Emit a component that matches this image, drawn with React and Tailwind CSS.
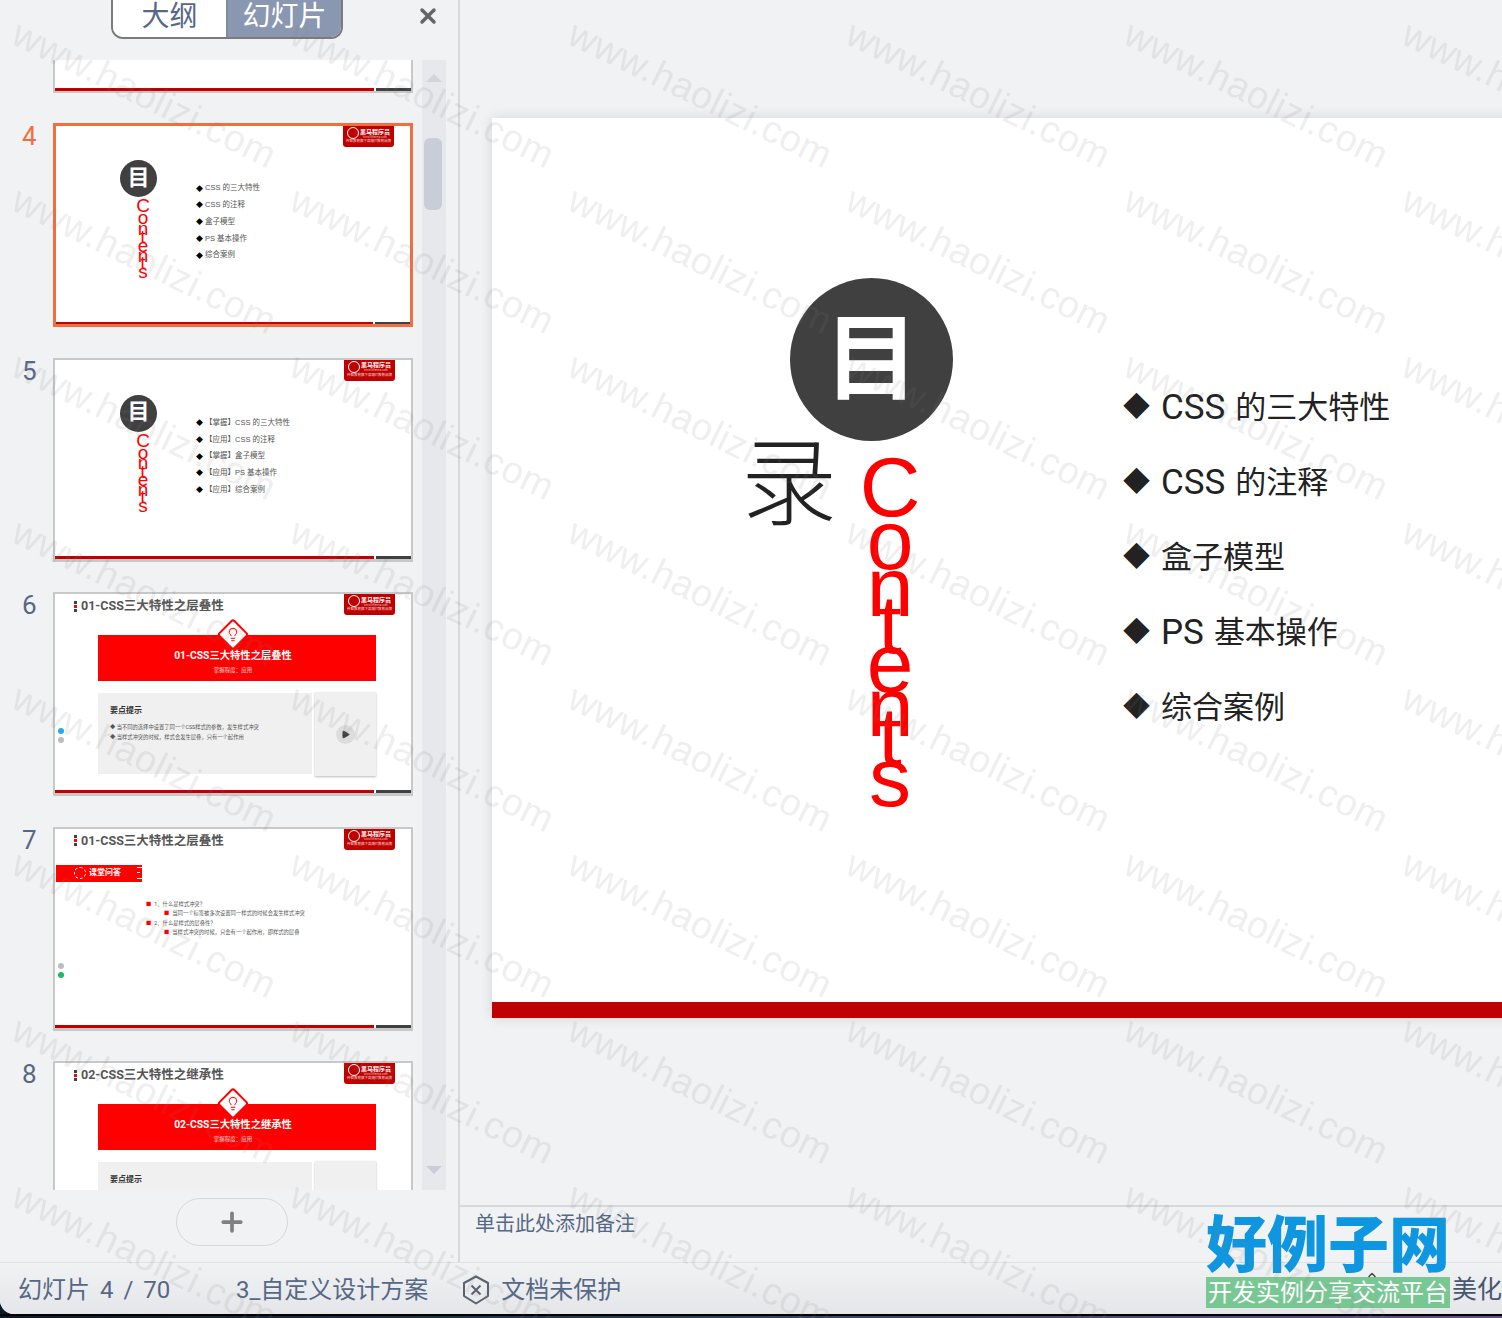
import React from "react";
import { X, Plus, Play, Lightbulb, ChevronUp } from "lucide-react";

const cjk = "font-['Roboto','Noto_Sans_CJK_SC','Liberation_Sans',sans-serif]";

const Watermark = () => {
  const cells = Array.from({ length: 54 });
  return (
    <div className="absolute inset-0 z-20 overflow-hidden pointer-events-none">
      <div className="absolute left-0 top-0 grid grid-cols-[repeat(6,278px)] auto-rows-[166px]">
        {cells.map((_, i) => (
          <div key={i} className="relative h-[166px] w-[278px]">
            <span className="absolute left-[15px] top-[12px] origin-left rotate-[26deg] whitespace-nowrap font-['Liberation_Sans',sans-serif] text-[38px] leading-none tracking-[0.5px] text-[#7f7f7f]/15">
              www.haolizi.com
            </span>
          </div>
        ))}
      </div>
    </div>
  );
};

const Badge = () => (
  <div className="absolute right-[16px] top-0 flex h-[21px] w-[51px] flex-col items-center rounded-b-[3px] bg-[#c00000] pt-[1px]">
    <div className="flex items-center gap-[1px]">
      <div className="h-[12px] w-[12px] rounded-full border-[1.5px] border-white" />
      <div className="flex flex-col items-center">
        <span className="text-[6px] font-bold leading-[7px] text-white">黑马程序员</span>
        <span className="text-[3px] leading-[4px] text-white/70">www.itheima.com</span>
      </div>
    </div>
    <div className="whitespace-nowrap text-[3.5px] leading-[5px] text-white/80">传智教育旗下高端IT教育品牌</div>
  </div>
);

const Footer = ({ thin }) => (
  <div className={`absolute inset-x-0 bottom-0 flex gap-[2px] ${thin ? "h-[2px]" : "h-[3px]"}`}>
    <div className="flex-1 bg-[#c00000]" />
    <div className="w-[35px] bg-[#404040]" />
  </div>
);

const MuIcon = ({ className }) => (
  <div className={`flex items-center justify-center rounded-full bg-[#404040] font-bold leading-none text-white ${className}`}>
    目
  </div>
);

const thumbLetters = [
  ["C", "h-[12px]"],
  ["o", "h-[10.7px]"],
  ["n", "h-[8.4px]"],
  ["t", "h-[8.9px]"],
  ["e", "h-[10px]"],
  ["n", "h-[6.6px]"],
  ["t", "h-[9.3px]"],
  ["s", "h-[9.3px]"],
];

const TocThumb = ({ items }) => (
  <div className="flex h-full">
    <div className="ml-[64px] mt-[34px] flex w-[37px] flex-col items-start">
      <MuIcon className="h-[37px] w-[37px] pb-[2px] text-[22px]" />
      <div className="ml-[13px] mt-[9px] flex w-[20px] flex-col items-center font-['Liberation_Sans',sans-serif] text-[19px] text-[#ff0000]">
        {thumbLetters.map(([c, cls], i) => (
          <span key={i} className={`${cls} leading-[0px]`}>{c}</span>
        ))}
      </div>
    </div>
    <div className="ml-[39px] mt-[56px] flex flex-col gap-[4.75px] font-['Liberation_Sans','Noto_Sans_CJK_SC',sans-serif]">
      {items.map((t) => (
        <div key={t} className="flex h-[12px] items-center gap-[2px] text-[7.5px] leading-none text-[#555]">
          <span className="text-[7px] text-black">◆</span>
          <span>{t}</span>
        </div>
      ))}
    </div>
  </div>
);

const SlideTitle = ({ children }) => (
  <div className="flex items-center gap-[4px] pl-[18px] pt-[3px] text-[12.5px] font-bold leading-[16px] text-[#555]">
    <div className="flex flex-col gap-[1px]">
      <div className="h-[3px] w-[3px] bg-[#404040]" />
      <div className="h-[3px] w-[3px] bg-[#ff0000]" />
      <div className="h-[3px] w-[3px] bg-[#404040]" />
    </div>
    {children}
  </div>
);

const BulbDiamond = () => (
  <div className="absolute left-[calc(50%-4px)] top-[-12px] flex h-[23px] w-[23px] -translate-x-1/2 rotate-45 items-center justify-center rounded-[3px] border-[2px] border-[#ff0000] bg-white">
    <Lightbulb size={15} strokeWidth={1.6} className="-rotate-45 text-[#ff0000]" />
  </div>
);

const SectionThumb = ({ title, lines }) => (
  <div className="flex h-full flex-col">
    <SlideTitle>{title}</SlideTitle>
    <div className="relative ml-[42px] mt-[21px] flex h-[46px] w-[278px] flex-col items-center bg-[#ff0000] pr-[8px] pt-[13px] text-white">
      <BulbDiamond />
      <div className="text-[10.3px] font-bold leading-[16px]">{title}</div>
      <div className="mt-[2px] text-[5.5px] leading-[8px] text-white/80">掌握程度：应用</div>
    </div>
    <div className="ml-[42px] mt-[11px] flex h-[84px] w-[278px] gap-[3px]">
      <div className="mt-[1px] h-[81px] flex-1 bg-[#f0f0f0] pl-[12px] pt-[12px]">
        <div className="text-[8px] font-bold leading-[12px] text-[#333]">要点提示</div>
        <div className="mt-[5px] flex flex-col">
          {lines.map((l) => (
            <div key={l} className="whitespace-nowrap text-[5.3px] leading-[10px] text-[#555]">◆ {l}</div>
          ))}
        </div>
      </div>
      <div className="flex w-[61px] items-center justify-center bg-[#f0f0f0] shadow-[0_1px_2px_#bbb]">
        {lines.length > 0 && (
          <div className="flex h-[19px] w-[19px] items-center justify-center rounded-full bg-[#dcdcdc]">
            <Play size={9} className="fill-[#404040] text-[#404040]" />
          </div>
        )}
      </div>
    </div>
    {lines.length > 0 && (
      <div className="absolute left-[3px] top-[134px] flex flex-col gap-[3px]">
        <div className="h-[6px] w-[6px] rounded-full bg-[#27a9e9]" />
        <div className="h-[6px] w-[6px] rounded-full bg-[#bdbdbd]" />
      </div>
    )}
  </div>
);

const QaThumb = () => (
  <div className="flex h-full flex-col">
    <SlideTitle>01-CSS三大特性之层叠性</SlideTitle>
    <div className="mt-[16px] flex h-[17px] w-[86px] items-center bg-[#ff0000] pl-[18px] text-white">
      <div className="mr-[3px] h-[12px] w-[12px] rounded-full border border-dashed border-white" />
      <span className="text-[8px] font-bold leading-none">课堂问答</span>
      <div className="ml-auto flex h-full flex-col justify-around">
        <div className="h-[1px] w-[5px] bg-white" />
        <div className="h-[1px] w-[3px] bg-white" />
        <div className="h-[1px] w-[5px] bg-white" />
      </div>
    </div>
    <div className="ml-[90px] mt-[18px] flex flex-col text-[5.3px] leading-[9.6px] text-[#555]">
      <div className="whitespace-nowrap"><span className="mr-[3px] text-[#ff0000]">■</span>1、什么是样式冲突？</div>
      <div className="ml-[18px] whitespace-nowrap"><span className="mr-[3px] text-[#ff0000]">■</span>当同一个标签被多次设置同一样式的时候会发生样式冲突</div>
      <div className="whitespace-nowrap"><span className="mr-[3px] text-[#ff0000]">■</span>2、什么是样式的层叠性？</div>
      <div className="ml-[18px] whitespace-nowrap"><span className="mr-[3px] text-[#ff0000]">■</span>当样式冲突的时候，只会有一个起作用，即样式的层叠</div>
    </div>
    <div className="absolute left-[3px] top-[134px] flex flex-col gap-[3px]">
      <div className="h-[6px] w-[6px] rounded-full bg-[#bdbdbd]" />
      <div className="h-[6px] w-[6px] rounded-full bg-[#1fb964]" />
    </div>
  </div>
);

const Thumb = ({ num, active, children, clip }) => (
  <div className={`flex ${clip ? "h-[129px]" : "h-[204px]"} shrink-0`}>
    <div className={`ml-[22px] w-[31px] text-[26px] leading-[26px] ${active ? "text-[#f36d41]" : "text-[#566885]"}`}>{num}</div>
    <div className={`relative h-[204px] w-[360px] shrink-0 bg-white ${active ? "border-[3px] border-[#f36d41]" : "border-2 border-b-[3px] border-[#c8c8c8]"}`}>
      <Badge />
      <div className={`h-full ${active ? "" : "pl-[1px] pt-[1px]"}`}>{children}</div>
      <Footer thin={active} />
    </div>
  </div>
);

const mainItems = [
  ["CSS", "的三大特性"],
  ["CSS", "的注释"],
  ["", "盒子模型"],
  ["PS", "基本操作"],
  ["", "综合案例"],
];

// baseline to baseline distance of the squeezed vertical word
const contents = [
  ["C", "h-[53px]"],
  ["o", "h-[47px]"],
  ["n", "h-[37px]"],
  ["t", "h-[39px]"],
  ["e", "h-[44px]"],
  ["n", "h-[29px]"],
  ["t", "h-[41px]"],
  ["s", "h-[41px]"],
];

const MainSlide = () => (
  <div className="relative ml-[32px] mt-[118px] h-[900px] w-[1200px] bg-white shadow-[0_0_12px_rgba(0,0,0,0.12)]">
    <div className="flex h-full">
      <div className="ml-[255px] flex w-[376px] flex-col items-start pt-[160px]">
        <MuIcon className="ml-[43px] h-[163px] w-[163px] text-[94px]" />
        <div className="flex">
          <div className="-ml-[6px] -mt-[5px] w-[124px] text-[96px] font-light leading-[96px] text-[#222]">录</div>
          <div className="mt-[46px] flex w-[50px] flex-col items-center font-['Liberation_Sans',sans-serif] text-[84px] text-[#ff0000]">
            {contents.map(([c, cls], i) => (
              <span key={i} className={`${cls} leading-[0px]`}>{c}</span>
            ))}
          </div>
        </div>
      </div>
      <div className="mt-[261px] flex flex-col gap-[19px]">
        {mainItems.map(([latin, rest]) => (
          <div key={latin + rest} className="flex h-[56px] items-center text-[31px] leading-none text-[#222]">
            <span className="w-[38px] text-[27px] leading-none">◆</span>
            {latin && <span className="mr-[10px] text-[35px]">{latin}</span>}
            <span>{rest}</span>
          </div>
        ))}
      </div>
    </div>
    <div className="absolute inset-x-0 bottom-0 h-[16px] bg-[#c00000]" />
  </div>
);

const Sidebar = () => (
  <div className="flex w-[460px] shrink-0 flex-col border-r-2 border-[#d5d8dd]">
    <div className="flex h-[60px] items-start">
      <div className="ml-[111px] flex h-[39px] w-[232px] overflow-hidden rounded-b-[12px] border-2 border-t-0 border-[#7b7b7b]">
        <div className="flex w-[113px] items-center justify-center bg-white pb-[4px] text-[28px] text-[#566885]">大纲</div>
        <div className="flex flex-1 items-center justify-center border-l-2 border-[#7b7b7b]/40 bg-[#8a97b1] pb-[4px] text-[28px] text-white">幻灯片</div>
      </div>
      <X size={24} strokeWidth={3.5} className="ml-[73px] mt-[4px] text-[#666]" />
    </div>
    <div className="flex h-[1130px] overflow-hidden">
      <div className="flex w-[422px] flex-col gap-[30.5px] overflow-hidden">
        <div className="relative mb-[-0.5px] ml-[53px] h-[33px] w-[360px] shrink-0 border-x-2 border-b-2 border-[#c8c8c8] bg-white">
          <Footer />
        </div>
        <Thumb num={4} active>
          <TocThumb items={["CSS 的三大特性", "CSS 的注释", "盒子模型", "PS 基本操作", "综合案例"]} />
        </Thumb>
        <Thumb num={5}>
          <TocThumb items={["【掌握】CSS 的三大特性", "【应用】CSS 的注释", "【掌握】盒子模型", "【应用】PS 基本操作", "【应用】综合案例"]} />
        </Thumb>
        <Thumb num={6}>
          <SectionThumb title="01-CSS三大特性之层叠性" lines={["当不同的选择中设置了同一个CSS样式的参数，发生样式冲突", "当样式冲突的时候，样式会发生层叠，只有一个起作用"]} />
        </Thumb>
        <Thumb num={7}>
          <QaThumb />
        </Thumb>
        <Thumb num={8} clip>
          <SectionThumb title="02-CSS三大特性之继承性" lines={[]} />
        </Thumb>
      </div>
      <div className="flex w-[24px] flex-col items-center bg-[#e6e8ec] pt-[14px]">
        <div className="h-0 w-0 border-x-[8px] border-b-[8px] border-x-transparent border-b-[#d0d4db]" />
        <div className="mr-[2px] mt-[56px] h-[72px] w-[18px] rounded-[6px] bg-[#c8cdd7]" />
        <div className="mb-[16px] mt-auto h-0 w-0 border-x-[8px] border-t-[8px] border-x-transparent border-t-[#c8cdd7]" />
      </div>
    </div>
    <div className="flex flex-1 items-start pl-[176px] pt-[8px]">
      <div className="flex h-[48px] w-[112px] items-center justify-center rounded-full border border-[#d5d7db]">
        <Plus size={30} strokeWidth={3} className="text-[#808080]" />
      </div>
    </div>
  </div>
);

const ShieldX = () => (
  <svg width="28" height="30" viewBox="0 0 28 30" fill="none" stroke="#5a6270" strokeWidth="2" className="shrink-0">
    <path d="M14 1.5 L26 8 V21 L14 28.5 L2 21 V8 Z" strokeLinejoin="round" />
    <path d="M9.5 10.5 L18.5 19.5 M18.5 10.5 L9.5 19.5" />
  </svg>
);

const StatusBar = () => (
  <div className="relative flex h-[52px] items-center border-t border-[#dfe1e5] bg-linear-to-b from-[#f1f2f4] to-[#e5e6e9] pl-[18px] pt-[2px] text-[24px] leading-none text-[#566885]">
    <span className="w-[218px] [word-spacing:4px]">幻灯片 4 / 70</span>
    <span>3_自定义设计方案</span>
    <div className="ml-[34px] flex items-center gap-[11px]">
      <ShieldX />
      <span>文档未保护</span>
    </div>
    <span className="absolute left-[1452px] whitespace-nowrap text-[25px] text-[#4a5670]">美化</span>
  </div>
);

const Logo = () => (
  <div className="absolute left-[1206px] top-[1205px] z-10 flex w-[244px] flex-col">
    <div className="flex h-[72px] items-center justify-center whitespace-nowrap pt-[10px] text-[61px] font-black leading-none text-[#0e96e0]">好例子网</div>
    <ChevronUp size={12} strokeWidth={3} className="absolute left-[160px] top-[64px] text-[#444]" />
    <div className="flex h-[31px] items-center justify-center whitespace-nowrap bg-[#6cc38a]/90 text-[24px] leading-none text-white">开发实例分享交流平台</div>
  </div>
);

export default function App() {
  return (
    <div className={`relative h-[1318px] w-[1502px] overflow-hidden bg-[#0b1a24] ${cjk}`}>
      <div className="flex h-[1314px] flex-col overflow-hidden rounded-bl-[14px] bg-[#f1f2f4]">
        <div className="flex h-[1262px]">
          <Sidebar />
          <div className="flex min-w-0 flex-1 flex-col">
            <div className="h-[1205px] overflow-hidden">
              <MainSlide />
            </div>
            <div className="flex-1 border-t-2 border-[#d5d8dd] pl-[15px] pt-[3px] text-[20px] leading-[28px] text-[#566885]">
              单击此处添加备注
            </div>
          </div>
        </div>
        <StatusBar />
      </div>
      <div className="h-[2px] bg-black" />
      <div className="h-[2px] bg-linear-to-r from-[#0b1a24] via-[#2d4560] to-[#6a4f85]" />
      <Logo />
      <Watermark />
    </div>
  );
}
